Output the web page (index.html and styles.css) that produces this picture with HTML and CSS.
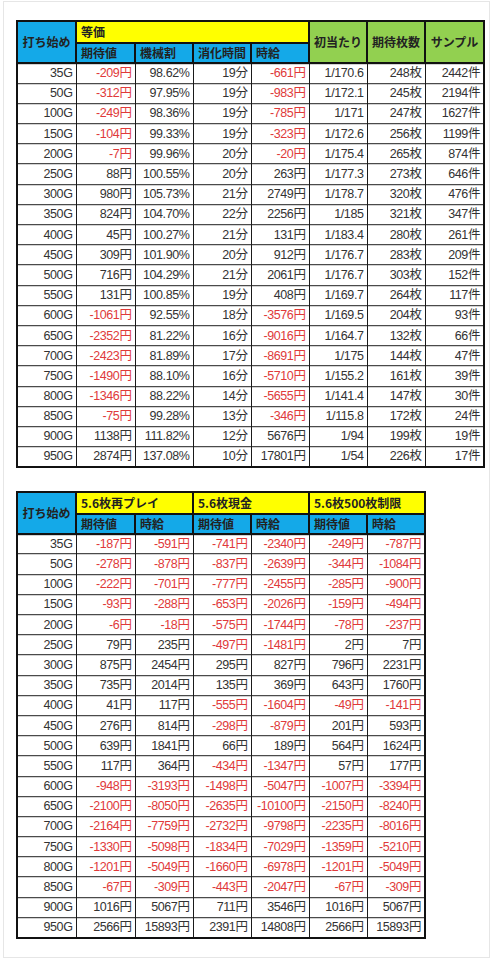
FILE: index.html
```html
<!DOCTYPE html>
<html lang="ja">
<head>
    <meta charset="UTF-8">
    <meta name="viewport" content="width=device-width, initial-scale=1.0">
    <title>打ち始め別 期待値</title>
    <link rel="stylesheet" href="styles.css">
</head>
<body>
    <div class="frame">
        <table class="sheet sheet-main">
            <colgroup>
                <col class="w59"><col class="w59"><col class="w58"><col class="w58">
                <col class="w58"><col class="w58"><col class="w58"><col class="w59">
            </colgroup>
            <thead>
                <tr class="head-top">
                    <th rowspan="2" class="blue center">打ち始め</th>
                    <th colspan="4" class="yellow">等価</th>
                    <th rowspan="2" class="green center">初当たり</th>
                    <th rowspan="2" class="green center">期待枚数</th>
                    <th rowspan="2" class="green center">サンプル</th>
                </tr>
                <tr class="head-sub">
                    <th class="blue">期待値</th>
                    <th class="blue">機械割</th>
                    <th class="blue">消化時間</th>
                    <th class="blue">時給</th>
                </tr>
            </thead>
            <tbody id="main-body"></tbody>
        </table>

        <table class="sheet sheet-sub">
            <colgroup>
                <col class="w59"><col class="w59"><col class="w58"><col class="w58">
                <col class="w58"><col class="w58"><col class="w58">
            </colgroup>
            <thead>
                <tr class="head-top">
                    <th rowspan="2" class="blue center">打ち始め</th>
                    <th colspan="2" class="yellow">5.6枚再プレイ</th>
                    <th colspan="2" class="yellow">5.6枚現金</th>
                    <th colspan="2" class="yellow">5.6枚500枚制限</th>
                </tr>
                <tr class="head-sub">
                    <th class="blue">期待値</th>
                    <th class="blue">時給</th>
                    <th class="blue">期待値</th>
                    <th class="blue">時給</th>
                    <th class="blue">期待値</th>
                    <th class="blue">時給</th>
                </tr>
            </thead>
            <tbody id="sub-body"></tbody>
        </table>
    </div>

    <script src="script.js"></script>
</body>
</html>
```

FILE: styles.css
```css
* {
    box-sizing: border-box;
}

body {
    margin: 0;
    background: #fff;
    font-family: "Liberation Sans", "Noto Sans CJK JP", sans-serif;
    color: #333;
}

.frame {
    margin: 1px 0 0 3px;
    width: 487px;
    height: 957px;
    padding: 18px 0 0 12px;
    border: 1px solid #e6e6e6;
}

.sheet {
    border-collapse: collapse;
    table-layout: fixed;
    border: 2px solid #111;
    font-size: 12px;
}

.sheet-main {
    width: 467px;
}

.sheet-sub {
    width: 408px;
    margin-top: 23px;
}

.w59 {
    width: 59px;
}

.w58 {
    width: 58px;
}

.sheet th {
    border: 2px solid #111;
    padding: 0 4px;
    font-family: "Noto Sans CJK JP", sans-serif;
    font-size: 12px;
    line-height: 16px;
    font-weight: bold;
    color: #222;
    text-align: left;
    white-space: nowrap;
}

.head-top th {
    height: 22px;
}

.head-sub th {
    height: 20px;
}

.sheet th.center {
    text-align: center;
    padding: 0 2px;
}

.blue {
    background: #14a9e8;
}

.yellow {
    background: #ffff00;
}

.green {
    background: #92d050;
}

.sheet td {
    height: 20.2px;
    padding: 1px 3px 0;
    border-left: 1px solid #1a1a1a;
    border-right: 1px solid #1a1a1a;
    border-top: 1px solid #4a4a4a;
    box-shadow: inset 0 1px 0 #d2d2d2;
    font-size: 12.5px;
    line-height: 17px;
    text-align: right;
    white-space: nowrap;
    letter-spacing: -0.4px;
}

.sheet td.neg {
    color: #e03a3a;
}
```

FILE: script.js
```js
const mainRows = [
    ["35G", "-209円", "98.62%", "19分", "-661円", "1/170.6", "248枚", "2442件"],
    ["50G", "-312円", "97.95%", "19分", "-983円", "1/172.1", "245枚", "2194件"],
    ["100G", "-249円", "98.36%", "19分", "-785円", "1/171", "247枚", "1627件"],
    ["150G", "-104円", "99.33%", "19分", "-323円", "1/172.6", "256枚", "1199件"],
    ["200G", "-7円", "99.96%", "20分", "-20円", "1/175.4", "265枚", "874件"],
    ["250G", "88円", "100.55%", "20分", "263円", "1/177.3", "273枚", "646件"],
    ["300G", "980円", "105.73%", "21分", "2749円", "1/178.7", "320枚", "476件"],
    ["350G", "824円", "104.70%", "22分", "2256円", "1/185", "321枚", "347件"],
    ["400G", "45円", "100.27%", "21分", "131円", "1/183.4", "280枚", "261件"],
    ["450G", "309円", "101.90%", "20分", "912円", "1/176.7", "283枚", "209件"],
    ["500G", "716円", "104.29%", "21分", "2061円", "1/176.7", "303枚", "152件"],
    ["550G", "131円", "100.85%", "19分", "408円", "1/169.7", "264枚", "117件"],
    ["600G", "-1061円", "92.55%", "18分", "-3576円", "1/169.5", "204枚", "93件"],
    ["650G", "-2352円", "81.22%", "16分", "-9016円", "1/164.7", "132枚", "66件"],
    ["700G", "-2423円", "81.89%", "17分", "-8691円", "1/175", "144枚", "47件"],
    ["750G", "-1490円", "88.10%", "16分", "-5710円", "1/155.2", "161枚", "39件"],
    ["800G", "-1346円", "88.22%", "14分", "-5655円", "1/141.4", "147枚", "30件"],
    ["850G", "-75円", "99.28%", "13分", "-346円", "1/115.8", "172枚", "24件"],
    ["900G", "1138円", "111.82%", "12分", "5676円", "1/94", "199枚", "19件"],
    ["950G", "2874円", "137.08%", "10分", "17801円", "1/54", "226枚", "17件"]
];

const subRows = [
    ["35G", "-187円", "-591円", "-741円", "-2340円", "-249円", "-787円"],
    ["50G", "-278円", "-878円", "-837円", "-2639円", "-344円", "-1084円"],
    ["100G", "-222円", "-701円", "-777円", "-2455円", "-285円", "-900円"],
    ["150G", "-93円", "-288円", "-653円", "-2026円", "-159円", "-494円"],
    ["200G", "-6円", "-18円", "-575円", "-1744円", "-78円", "-237円"],
    ["250G", "79円", "235円", "-497円", "-1481円", "2円", "7円"],
    ["300G", "875円", "2454円", "295円", "827円", "796円", "2231円"],
    ["350G", "735円", "2014円", "135円", "369円", "643円", "1760円"],
    ["400G", "41円", "117円", "-555円", "-1604円", "-49円", "-141円"],
    ["450G", "276円", "814円", "-298円", "-879円", "201円", "593円"],
    ["500G", "639円", "1841円", "66円", "189円", "564円", "1624円"],
    ["550G", "117円", "364円", "-434円", "-1347円", "57円", "177円"],
    ["600G", "-948円", "-3193円", "-1498円", "-5047円", "-1007円", "-3394円"],
    ["650G", "-2100円", "-8050円", "-2635円", "-10100円", "-2150円", "-8240円"],
    ["700G", "-2164円", "-7759円", "-2732円", "-9798円", "-2235円", "-8016円"],
    ["750G", "-1330円", "-5098円", "-1834円", "-7029円", "-1359円", "-5210円"],
    ["800G", "-1201円", "-5049円", "-1660円", "-6978円", "-1201円", "-5049円"],
    ["850G", "-67円", "-309円", "-443円", "-2047円", "-67円", "-309円"],
    ["900G", "1016円", "5067円", "711円", "3546円", "1016円", "5067円"],
    ["950G", "2566円", "15893円", "2391円", "14808円", "2566円", "15893円"]
];

const fillTable = (tbody, rows) => {
    rows.forEach((row) => {
        const tr = document.createElement("tr");
        row.forEach((value) => {
            const td = document.createElement("td");
            td.textContent = value;
            // マイナスの金額は赤字
            if (value.startsWith("-")) td.classList.add("neg");
            tr.appendChild(td);
        });
        tbody.appendChild(tr);
    });
};

fillTable(document.getElementById("main-body"), mainRows);
fillTable(document.getElementById("sub-body"), subRows);
```
